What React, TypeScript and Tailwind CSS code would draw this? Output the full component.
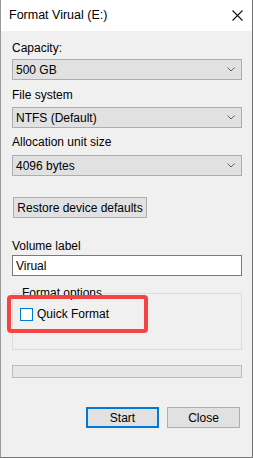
import React from 'react';

const font = { fontFamily: '"Liberation Sans", Arial, sans-serif' };

function Chevron() {
  return (
    <svg width="8" height="5" viewBox="0 0 8 5" className="shrink-0">
      <path d="M0.5 0.5 L4 4 L7.5 0.5" fill="none" stroke="#606060" strokeWidth="1" />
    </svg>
  );
}

function Select({ value }: { value: string }) {
  return (
    <div className="flex h-[21px] items-center justify-between border border-[#adadad] bg-[#e1e1e1] pl-[3px] pr-[6px] text-[12px] text-black">
      <span>{value}</span>
      <Chevron />
    </div>
  );
}

function Label({ text, className = '' }: { text: string; className?: string }) {
  return <div className={`h-[16px] text-[12px] leading-[16px] text-black ${className}`}>{text}</div>;
}

export default function App() {
  return (
    <div
      className="flex h-[458px] w-[253px] flex-col border-r border-r-[#707070] border-l border-l-[#9a9a9a] border-b border-b-[#7a7a7a] bg-[#f0f0f0]"
      style={font}
    >
      {/* Title bar */}
      <div className="flex h-[31px] shrink-0 items-center justify-between bg-white pl-[8px] pr-[9px]">
        <span className="text-[12.5px] text-black">Format Virual (E:)</span>
        <svg width="11" height="11" viewBox="0 0 11 11">
          <path d="M0.5 0.5 L10.5 10.5 M10.5 0.5 L0.5 10.5" stroke="#111" strokeWidth="1.1" />
        </svg>
      </div>

      <div className="flex flex-col pl-[11px] pr-[10px]">
        <Label text="Capacity:" className="mt-[9px]" />
        <div className="mt-[3px]">
          <Select value="500 GB" />
        </div>

        <Label text="File system" className="mt-[7px]" />
        <div className="mt-[4px]">
          <Select value="NTFS (Default)" />
        </div>

        <Label text="Allocation unit size" className="mt-[6px]" />
        <div className="mt-[5px]">
          <Select value="4096 bytes" />
        </div>

        <button className="ml-[1px] mt-[21px] h-[21px] w-[134px] border border-[#adadad] bg-[#e1e1e1] text-[12px] text-black">
          Restore device defaults
        </button>

        <Label text="Volume label" className="mt-[20px]" />
        <div className="mt-[1px] flex h-[21px] items-center border border-[#7a7a7a] bg-white pl-[3px] text-[12px] text-black">
          Virual
        </div>

        {/* Format options group */}
        <div className="relative mt-[17px] h-[57px] border border-[#dcdcdc]">
          <span className="absolute left-[8px] top-[-9px] bg-[#f0f0f0] px-[1px] text-[12px] leading-[16px] text-black">
            Format options
          </span>
          <div className="absolute left-[-6px] top-[1px] flex h-[38px] w-[141px] items-center rounded-[4px] border-[4px] border-[#f54343] pl-[9px]">
            <div className="h-[13px] w-[13px] border border-[#0078d7] bg-white" />
            <span className="ml-[4px] text-[12px] text-black">Quick Format</span>
          </div>
        </div>

        {/* Progress bar */}
        <div className="mt-[15px] h-[13px] border border-[#bcbcbc] bg-[#e6e6e6]" />

        {/* Buttons */}
        <div className="mt-[29px] flex justify-end gap-[8px] pr-[2px]">
          <button className="h-[21px] w-[73px] border-2 border-[#0078d7] bg-[#e1e1e1] text-[12px] text-black">
            Start
          </button>
          <button className="h-[21px] w-[73px] border border-[#adadad] bg-[#e1e1e1] text-[12px] text-black">
            Close
          </button>
        </div>
      </div>
    </div>
  );
}
